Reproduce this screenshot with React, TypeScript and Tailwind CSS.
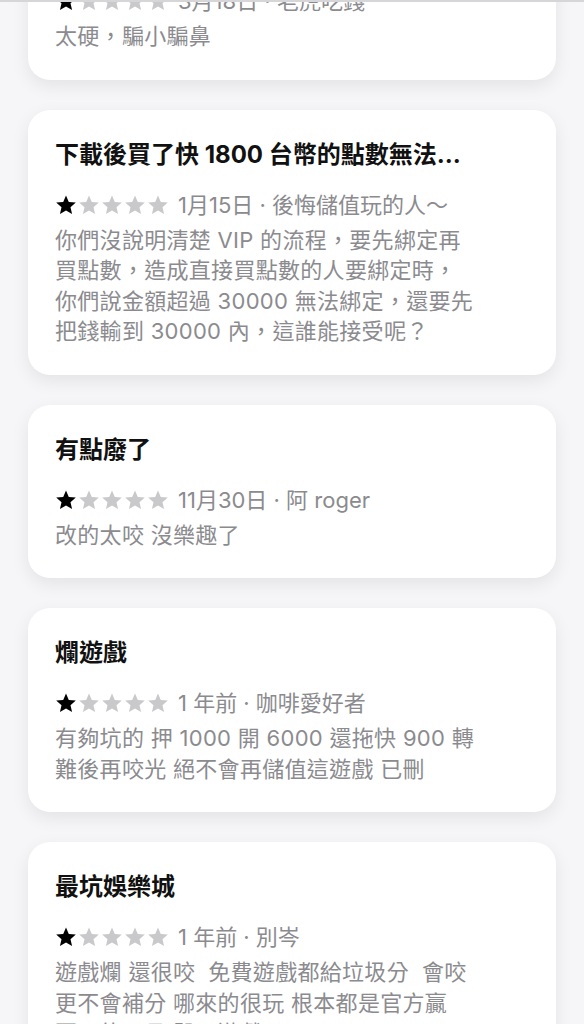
import React from "react";

type Review = {
    title: string;
    date: string;
    author: string;
    lines: string[];
};

const reviews: Review[] = [
    {
        title: "騙人的遊戲",
        date: "3月18日",
        author: "老虎吃錢",
        lines: ["太硬，騙小騙鼻"],
    },
    {
        title: "下載後買了快 1800 台幣的點數無法...",
        date: "1月15日",
        author: "後悔儲值玩的人～",
        lines: [
            "你們沒說明清楚 VIP 的流程，要先綁定再",
            "買點數，造成直接買點數的人要綁定時，",
            "你們說金額超過 30000 無法綁定，還要先",
            "把錢輸到 30000 內，這誰能接受呢？",
        ],
    },
    {
        title: "有點廢了",
        date: "11月30日",
        author: "阿 roger",
        lines: ["改的太咬 沒樂趣了"],
    },
    {
        title: "爛遊戲",
        date: "1 年前",
        author: "咖啡愛好者",
        lines: ["有夠坑的 押 1000 開 6000 還拖快 900 轉", "難後再咬光 絕不會再儲值這遊戲 已刪"],
    },
    {
        title: "最坑娛樂城",
        date: "1 年前",
        author: "別岑",
        lines: [
            "遊戲爛 還很咬  免費遊戲都給垃圾分  會咬",
            "更不會補分 哪來的很玩 根本都是官方贏",
            "要玩的工具 骰子遊戲",
        ],
    },
];

const STAR = "M12 1.6l3.05 7.05 7.65.68-5.8 5.05 1.72 7.5L12 18l-6.62 3.88 1.72-7.5-5.8-5.05 7.65-.68z";

function Stars({ rating }: { rating: number }) {
    return (
        <div className="flex items-center gap-[1px]">
            {[0, 1, 2, 3, 4].map((i) => (
                <svg key={i} viewBox="0 0 24 24" className="h-[22px] w-[22px]">
                    <path d={STAR} fill={i < rating ? "#000000" : "#c9c9cc"} />
                </svg>
            ))}
        </div>
    );
}

function ReviewCard({ review }: { review: Review }) {
    return (
        <div className="rounded-[22px] bg-white px-[27px] pt-[30px] pb-[28px] shadow-[0_6px_18px_rgba(0,0,0,0.08)]">
            <h3 className="text-[24px] leading-[30px] font-bold text-[#111111] whitespace-nowrap overflow-hidden">
                {review.title}
            </h3>
            <div className="mt-[19px] flex h-[32px] items-center">
                <Stars rating={1} />
                <span className="ml-[9px] text-[22px] leading-[32px] text-[#8b8b8f]">
                    {review.date} · {review.author}
                </span>
            </div>
            <div className="mt-[4px] text-[22px] leading-[30.5px] text-[#8b8b8f] tracking-[0.3px]">
                {review.lines.map((line, i) => (
                    <p key={i} className="whitespace-pre">
                        {line}
                    </p>
                ))}
            </div>
        </div>
    );
}

export default function App() {
    return (
        <div
            className="relative h-[1024px] w-full overflow-hidden bg-[#f6f6f8]"
            style={{ fontFamily: 'Inter, "Noto Sans CJK TC", "Noto Sans", sans-serif' }}
        >
            {/* thin top edge */}
            <div className="absolute inset-x-0 top-0 z-10 h-[2px] bg-[#d6d6d8]" />

            <div className="flex flex-col gap-[30px] px-[28px] -mt-[94px]">
                {reviews.map((r, i) => (
                    <ReviewCard key={i} review={r} />
                ))}
            </div>
        </div>
    );
}
